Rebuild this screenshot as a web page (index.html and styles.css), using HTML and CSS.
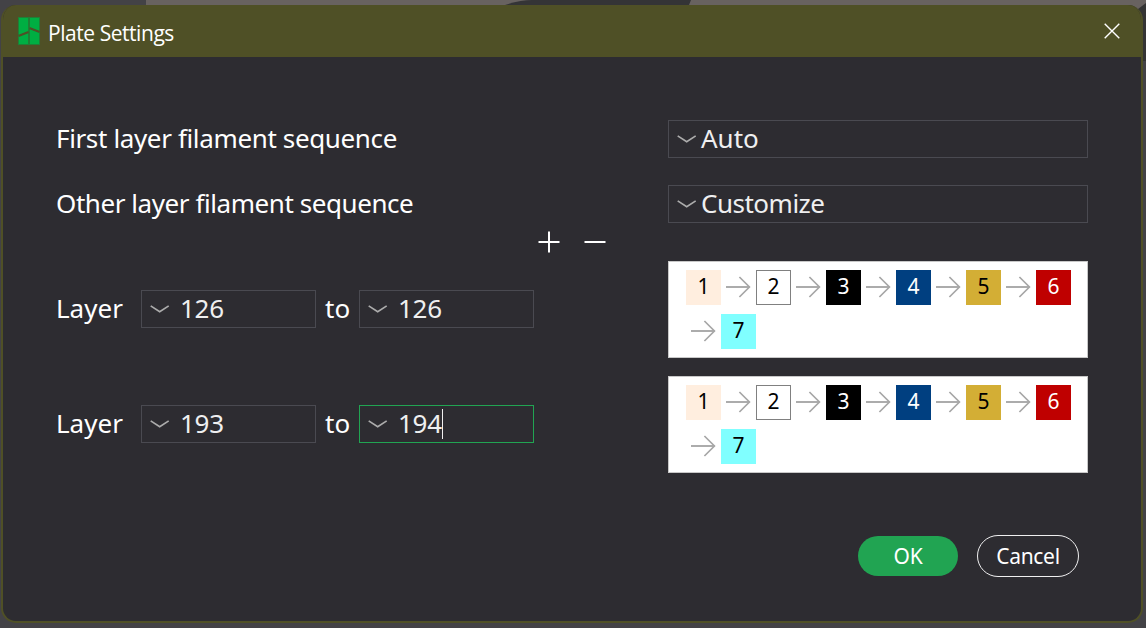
FILE: index.html
```html
<!DOCTYPE html>
<html lang="en">
<head>
<meta charset="utf-8">
<title>Plate Settings</title>
<link rel="stylesheet" href="styles.css">
</head>
<body>
<svg class="defs" width="0" height="0">
  <symbol id="chevron" viewBox="0 0 20 10"><path d="M.7 1.9 L9.7 7.8 L18.7 1.9" fill="none" stroke="#acacac" stroke-width="1.7"/></symbol>
  <symbol id="arrow" viewBox="0 0 26 22"><path d="M1 11 H24.5" fill="none" stroke="#acacac" stroke-width="2"/><path d="M14.4 1 L24.4 11 L14.4 21" fill="none" stroke="#a6a6a6" stroke-width="1.7"/></symbol>
</svg>
<svg class="backdrop" viewBox="0 0 1146 628">
  <rect width="1146" height="628" fill="#434246"/>
  <rect x="146" width="1000" height="60" fill="#686260"/>
  <path d="M505 5 Q520 0 532 0 H691 L689 5Z" fill="#343436"/>
  <path d="M1138 9 L1146 3 V61 H1138Z" fill="#343434"/>
</svg>
<main class="window">
  <header class="titlebar">
    <svg class="logo" viewBox="0 0 22 28"><rect width="22" height="28" fill="#1f7f35"/><path d="M.5 18.8L10.5 15M11.5 11.2L21.5 15" stroke="#4f5026" stroke-width="2.4"/><path d="M1 1H10V14L1 17.6Z M1 20L10 16.4V27H1Z M12 1H21V13.6L12 10Z M12 12.4L21 16V27H12Z" fill="#00ae42"/></svg>
    <h1 class="title">Plate Settings</h1>
    <svg class="close" viewBox="0 0 16 16"><path d="M.7 .7L15.3 15.3M15.3 .7L.7 15.3" stroke="#fff" stroke-width="1.4"/></svg>
  </header>
  <section class="content">
    <div class="row select-row">
      <span class="label first">First layer filament sequence</span>
      <div class="field select"><svg class="chevron"><use href="#chevron"/></svg><span class="auto">Auto</span></div>
    </div>
    <div class="row">
      <span class="label other">Other layer filament sequence</span>
      <div class="field select"><svg class="chevron"><use href="#chevron"/></svg><span class="customize">Customize</span></div>
    </div>
    <div class="tools">
      <svg class="tool" viewBox="0 0 22 22"><path d="M.5 11H21.5M11 .5V21.5" stroke="#fff" stroke-width="2"/></svg>
      <svg class="tool" viewBox="0 0 22 22"><path d="M.5 11H21.5" stroke="#fff" stroke-width="2"/></svg>
    </div>
    <div class="row layer-row">
      <div class="range">
        <span class="layer">Layer</span>
        <div class="field number"><svg class="chevron"><use href="#chevron"/></svg><span>126</span></div>
        <span class="to">to</span>
        <div class="field number"><svg class="chevron"><use href="#chevron"/></svg><span>126</span></div>
      </div>
      <div class="sequence">
        <b class="tile t1">1</b><svg class="arrow"><use href="#arrow"/></svg><b class="tile t2">2</b><svg class="arrow"><use href="#arrow"/></svg><b class="tile t3">3</b><svg class="arrow"><use href="#arrow"/></svg><b class="tile t4">4</b><svg class="arrow"><use href="#arrow"/></svg><b class="tile t5">5</b><svg class="arrow"><use href="#arrow"/></svg><b class="tile t6">6</b><svg class="arrow"><use href="#arrow"/></svg><b class="tile t7">7</b>
      </div>
    </div>
    <div class="row layer-row">
      <div class="range">
        <span class="layer">Layer</span>
        <div class="field number"><svg class="chevron"><use href="#chevron"/></svg><span>193</span></div>
        <span class="to">to</span>
        <div class="field number focused"><svg class="chevron"><use href="#chevron"/></svg><span>194</span><i class="caret"></i></div>
      </div>
      <div class="sequence">
        <b class="tile t1">1</b><svg class="arrow"><use href="#arrow"/></svg><b class="tile t2">2</b><svg class="arrow"><use href="#arrow"/></svg><b class="tile t3">3</b><svg class="arrow"><use href="#arrow"/></svg><b class="tile t4">4</b><svg class="arrow"><use href="#arrow"/></svg><b class="tile t5">5</b><svg class="arrow"><use href="#arrow"/></svg><b class="tile t6">6</b><svg class="arrow"><use href="#arrow"/></svg><b class="tile t7">7</b>
      </div>
    </div>
    <footer class="actions">
      <button class="button ok">OK</button>
      <button class="button cancel">Cancel</button>
    </footer>
  </section>
</main>
</body>
</html>
```
FILE: styles.css
```css
* { box-sizing: border-box; }
html, body { height: 100%; overflow: hidden; }
body { margin: 0; background: #434246; color: #fff; font-family: "Noto Sans", sans-serif; font-size: 26px; line-height: 36px; }
svg { display: block; flex: none; }
.defs { position: absolute; }
.backdrop { position: absolute; inset: 0; width: 1146px; height: 628px; z-index: -1; }
.window { width: 1142px; height: 618px; margin: 5px 0 0 1px; border: 2px solid #4f5026; border-top: 0; border-radius: 15px; background: #2d2c31; overflow: hidden; }
.titlebar { height: 52px; padding: 0 21px 0 15px; display: flex; align-items: center; background: #4f5026; }
.logo { width: 22px; height: 28px; }
.title { margin: 3px 0 0 8px; font: 400 21px/28px "Open Sans", sans-serif; letter-spacing: -.45px; }
.close { width: 16px; height: 16px; margin-left: auto; }
.content { padding: 63px 53px 0; }
.row { display: flex; justify-content: space-between; align-items: center; }
.select-row { margin-bottom: 27px; }
.label, .layer, .to { white-space: nowrap; }
.label { padding-bottom: 3px; line-height: 34px; }
.first { letter-spacing: -.36px; }
.other { letter-spacing: -.43px; }
.field { display: flex; align-items: center; height: 38px; border: 1px solid #4a4a51; color: #efeff0; }
.field span { padding-bottom: 2px; line-height: 34px; }
.select { width: 420px; padding-left: 8px; }
.customize { letter-spacing: -.5px; }
.chevron { width: 20px; height: 10px; }
.select .chevron { margin-right: 4px; }
.number { width: 175px; padding-left: 8px; letter-spacing: -.3px; }
.number .chevron { margin-right: 10px; }
.focused { border-color: #21a452; }
.caret { width: 1px; height: 30px; background: #efeff0; }
.tools { display: flex; gap: 24px; height: 38px; align-items: center; padding-left: 482px; }
.tool { width: 22px; height: 22px; }
.range { display: flex; align-items: center; margin-top: -1px; }
.layer, .to { padding-bottom: 2px; line-height: 34px; }
.layer { width: 85px; }
.to { width: 43px; padding-left: 9px; }
.layer-row + .layer-row { margin-top: 18px; }
.sequence { display: flex; flex-wrap: wrap; align-content: flex-start; row-gap: 9px; width: 420px; height: 97px; padding: 8px 14px 0 17px; background: #fff; border: 1px solid #c8c8c8; }
.tile { width: 35px; height: 35px; font-size: 21px; font-weight: 400; line-height: 33px; text-align: center; color: #000; }
.arrow { width: 26px; height: 22px; margin: 6px 5px 7px 4px; }
.t1 { background: #ffeedf; }
.t2 { border: 1px solid #808080; line-height: 31px; }
.t3 { background: #000; color: #fff; }
.t4 { background: #003f80; color: #fff; }
.t5 { background: #d3ae35; }
.t6 { background: #bf0000; color: #fff; }
.t7 { background: #80ffff; }
.actions { display: flex; justify-content: flex-end; align-items: center; gap: 19px; padding: 62px 9px 0 0; }
.button { padding: 0 0 1px; border: 0; border-radius: 21px; color: #fff; font: 400 21px/28px "Noto Sans", sans-serif; letter-spacing: -.3px; }
.ok { width: 100px; height: 40px; background: #21a452; }
.cancel { width: 102px; height: 42px; border: 1px solid #efeff0; background: none; }
```
